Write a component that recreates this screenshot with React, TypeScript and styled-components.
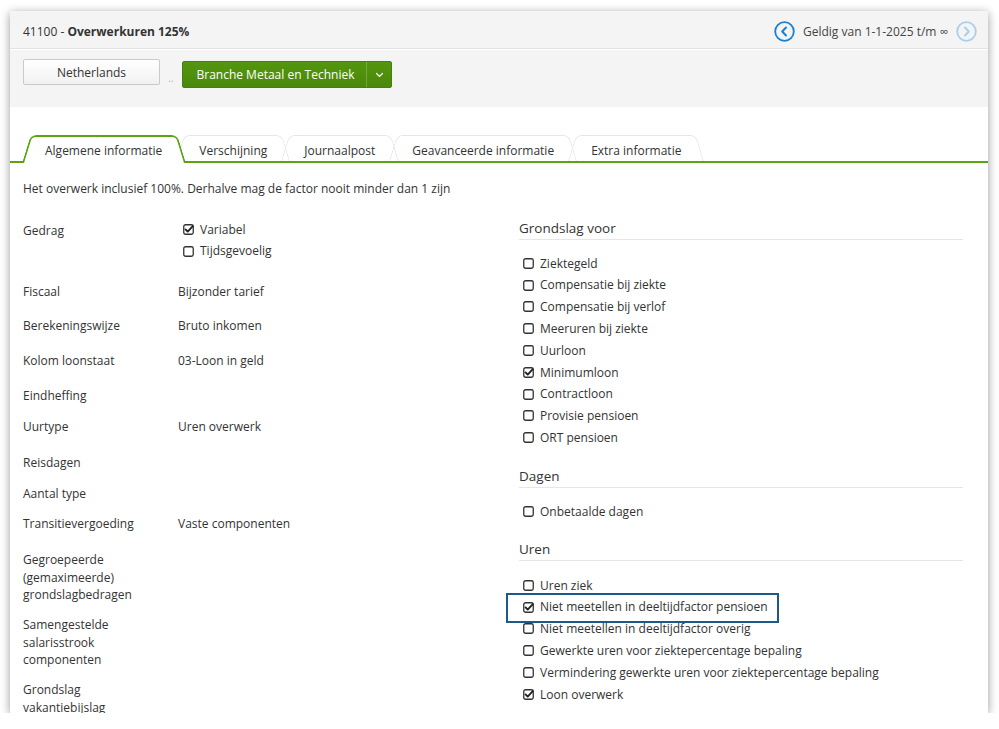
import React from "react";
import styled, { createGlobalStyle } from "styled-components";

const Global = createGlobalStyle`
  html, body { margin: 0; padding: 0; background: #fff; }
  body {
    font-family: "Open Sans", "Noto Sans", Arial, sans-serif;
    font-size: 12px;
    color: #333;
  }
  * { box-sizing: border-box; }
`;

const Panel = styled.div`
  margin: 11px 0 0 10px;
  width: 978px;
  height: 702px;
  background: #fff;
  box-shadow: 0 2px 9px rgba(0, 0, 0, 0.4);
  overflow: hidden;
`;

const Header = styled.div`
  background: #f4f4f4;
  height: 96px;
`;

const TitleBar = styled.div`
  height: 38px;
  display: flex;
  align-items: center;
  justify-content: space-between;
  padding: 4px 11px 0 13px;
  border-bottom: 1px solid #e2e2e2;
  box-shadow: 0 1px 0 #fff;
`;

const Title = styled.div`
  font-size: 12px;
  color: #333;
  b { font-weight: 700; }
`;

const Validity = styled.div`
  display: flex;
  align-items: center;
  gap: 8px;
  color: #444;
`;

const Toolbar = styled.div`
  display: flex;
  align-items: flex-start;
  padding: 10px 0 0 13px;
`;

const PlainButton = styled.button`
  width: 137px;
  height: 26px;
  font: inherit;
  color: #333;
  background: linear-gradient(#ffffff, #f1f1f1);
  border: 1px solid #cacaca;
  border-radius: 2px;
  padding: 0;
`;

const Dots = styled.span`
  width: 22px;
  text-align: center;
  padding-top: 12px;
  font-size: 10px;
  color: #aaa;
`;

const SplitButton = styled.div`
  display: flex;
  height: 27px;
  margin-top: 2px;
  background: linear-gradient(#54960f, #4a880a);
  border: 1px solid #45800a;
  border-radius: 2px;
  color: #fff;
`;

const SplitMain = styled.div`
  width: 183px;
  display: flex;
  align-items: center;
  justify-content: center;
  padding-left: 2px;
  font-size: 12px;
`;

const SplitToggle = styled.div`
  width: 25px;
  display: flex;
  align-items: center;
  justify-content: center;
  border-left: 1px solid rgba(255, 255, 255, 0.22);
`;

const TabStrip = styled.div`
  display: flex;
  margin-top: 28px;
  padding-left: 12px;
  height: 28px;
  border-bottom: 2px solid #5ba514;
`;

const Tab = styled.div<{ $active?: boolean }>`
  position: relative;
  height: 26px;
  padding: 4px 23px 0;
  display: flex;
  align-items: center;
  font-size: 12px;
  color: #333;
  white-space: nowrap;
  z-index: ${(p) => (p.$active ? 3 : 1)};
  & + & { margin-left: -9px; }

  &::before,
  &::after {
    content: "";
    position: absolute;
    top: 0;
    bottom: ${(p) => (p.$active ? "-2px" : "0")};
    background: ${(p) => (p.$active ? "#fff" : "transparent")};
    border-top: ${(p) => (p.$active ? "2px solid #5ba514" : "1px solid #e0e7ee")};
    z-index: -1;
    transform-origin: bottom;
  }
  &::before {
    left: 0;
    right: 50%;
    border-left: ${(p) => (p.$active ? "2px solid #5ba514" : "1px solid #e0e7ee")};
    border-top-left-radius: 6px;
    transform: skewX(-17deg);
  }
  &::after {
    left: 50%;
    right: 0;
    border-right: ${(p) => (p.$active ? "2px solid #5ba514" : "1px solid #e0e7ee")};
    border-top-right-radius: 6px;
    transform: skewX(17deg);
  }
`;

const Body = styled.div`
  padding: 17px 25px 0 13px;
`;

const Description = styled.div`
  line-height: 17.5px;
`;

const Columns = styled.div`
  display: grid;
  grid-template-columns: 496px 1fr;
  margin-top: 21px;
`;

const Row = styled.div<{ $pad: number }>`
  display: grid;
  grid-template-columns: 155px 1fr;
  align-items: start;
  padding-bottom: ${(p) => p.$pad}px;
`;

const Label = styled.div`
  padding-top: 3px;
  line-height: 17.5px;
`;

const Value = styled.div`
  padding-top: 3px;
  line-height: 17.5px;
`;

const CheckList = styled.div`
  padding-left: 5px;
`;

const CheckItem = styled.div`
  position: relative;
  display: flex;
  align-items: center;
  gap: 6px;
  height: 21.8px;
  line-height: 17.5px;
`;

const Highlight = styled.div`
  position: absolute;
  left: -17px;
  top: -3px;
  width: 273px;
  height: 30px;
  border: 2.5px solid #1c5a88;
  pointer-events: none;
`;

const Section = styled.div`
  & + & { margin-top: 18px; }
`;

const SectionTitle = styled.div`
  font-size: 13.5px;
  line-height: 19px;
  padding-bottom: 1px;
  border-bottom: 1px solid #e6e6e6;
  color: #333;
`;

const SectionList = styled.div`
  padding: 13px 0 0 4px;
`;

const CheckIcon = ({ checked }: { checked?: boolean }) => (
  <svg width="11" height="11" viewBox="0 0 11 11" style={{ flex: "none" }}>
    <rect x="0.75" y="0.75" width="9.5" height="9.5" rx="1.8" fill="none" stroke="#333" strokeWidth="1.3" />
    {checked && (
      <path d="M2.6 5.4 L4.7 7.6 L9.8 2.2" fill="none" stroke="#222" strokeWidth="1.9" strokeLinecap="round" strokeLinejoin="round" />
    )}
  </svg>
);

const NavCircle = ({ dir, color }: { dir: "left" | "right"; color: string }) => (
  <svg width="21" height="21" viewBox="0 0 21 21">
    <circle cx="10.5" cy="10.5" r="9.3" fill="none" stroke={color} strokeWidth="1.8" />
    {dir === "left" ? (
      <path d="M12 6.5 L8.2 10.5 L12 14.5" fill="none" stroke={color} strokeWidth="2" strokeLinecap="round" strokeLinejoin="round" />
    ) : (
      <path d="M9 6.5 L12.8 10.5 L9 14.5" fill="none" stroke={color} strokeWidth="2" strokeLinecap="round" strokeLinejoin="round" />
    )}
  </svg>
);

const Chevron = () => (
  <svg width="9" height="6" viewBox="0 0 9 6">
    <path d="M1.5 1.5 L4.5 4.5 L7.5 1.5" fill="none" stroke="#fff" strokeWidth="1.2" strokeLinecap="round" />
  </svg>
);

type Check = { label: string; checked?: boolean; highlight?: boolean };

const leftRows: { label: string[]; value?: string; checks?: Check[]; pad: number }[] = [
  { label: ["Gedrag"], checks: [{ label: "Variabel", checked: true }, { label: "Tijdsgevoelig" }], pad: 18 },
  { label: ["Fiscaal"], value: "Bijzonder tarief", pad: 13.5 },
  { label: ["Berekeningswijze"], value: "Bruto inkomen", pad: 14.5 },
  { label: ["Kolom loonstaat"], value: "03-Loon in geld", pad: 14.5 },
  { label: ["Eindheffing"], pad: 10.5 },
  { label: ["Uurtype"], value: "Uren overwerk", pad: 15.5 },
  { label: ["Reisdagen"], pad: 10.5 },
  { label: ["Aantal type"], pad: 9.5 },
  { label: ["Transitievergoeding"], value: "Vaste componenten", pad: 15.5 },
  { label: ["Gegroepeerde", "(gemaximeerde)", "grondslagbedragen"], pad: 9.5 },
  { label: ["Samengestelde", "salarisstrook", "componenten"], pad: 9.5 },
  { label: ["Grondslag", "vakantiebijslag"], pad: 10 },
];

const sections: { title: string; items: Check[] }[] = [
  {
    title: "Grondslag voor",
    items: [
      { label: "Ziektegeld" },
      { label: "Compensatie bij ziekte" },
      { label: "Compensatie bij verlof" },
      { label: "Meeruren bij ziekte" },
      { label: "Uurloon" },
      { label: "Minimumloon", checked: true },
      { label: "Contractloon" },
      { label: "Provisie pensioen" },
      { label: "ORT pensioen" },
    ],
  },
  { title: "Dagen", items: [{ label: "Onbetaalde dagen" }] },
  {
    title: "Uren",
    items: [
      { label: "Uren ziek" },
      { label: "Niet meetellen in deeltijdfactor pensioen", checked: true, highlight: true },
      { label: "Niet meetellen in deeltijdfactor overig" },
      { label: "Gewerkte uren voor ziektepercentage bepaling" },
      { label: "Vermindering gewerkte uren voor ziektepercentage bepaling" },
      { label: "Loon overwerk", checked: true },
    ],
  },
];

const tabs = ["Algemene informatie", "Verschijning", "Journaalpost", "Geavanceerde informatie", "Extra informatie"];

const CheckRow = ({ item }: { item: Check }) => (
  <CheckItem>
    <CheckIcon checked={item.checked} />
    <span>{item.label}</span>
    {item.highlight && <Highlight />}
  </CheckItem>
);

export default function App() {
  return (
    <>
      <Global />
      <Panel>
        <Header>
          <TitleBar>
            <Title>
              41100 - <b>Overwerkuren 125%</b>
            </Title>
            <Validity>
              <NavCircle dir="left" color="#1a80d4" />
              <span>Geldig van 1-1-2025 t/m ∞</span>
              <NavCircle dir="right" color="#a6d0f0" />
            </Validity>
          </TitleBar>
          <Toolbar>
            <PlainButton>Netherlands</PlainButton>
            <Dots>..</Dots>
            <SplitButton>
              <SplitMain>Branche Metaal en Techniek</SplitMain>
              <SplitToggle>
                <Chevron />
              </SplitToggle>
            </SplitButton>
          </Toolbar>
        </Header>
        <TabStrip>
          {tabs.map((t, i) => (
            <Tab key={t} $active={i === 0}>
              {t}
            </Tab>
          ))}
        </TabStrip>
        <Body>
          <Description>Het overwerk inclusief 100%. Derhalve mag de factor nooit minder dan 1 zijn</Description>
          <Columns>
            <div>
              {leftRows.map((r) => (
                <Row key={r.label.join(" ")} $pad={r.pad}>
                  <Label>
                    {r.label.map((l) => (
                      <div key={l}>{l}</div>
                    ))}
                  </Label>
                  {r.checks ? (
                    <CheckList>
                      {r.checks.map((c) => (
                        <CheckRow key={c.label} item={c} />
                      ))}
                    </CheckList>
                  ) : (
                    <Value>{r.value}</Value>
                  )}
                </Row>
              ))}
            </div>
            <div>
              {sections.map((s) => (
                <Section key={s.title}>
                  <SectionTitle>{s.title}</SectionTitle>
                  <SectionList>
                    {s.items.map((c) => (
                      <CheckRow key={c.label} item={c} />
                    ))}
                  </SectionList>
                </Section>
              ))}
            </div>
          </Columns>
        </Body>
      </Panel>
    </>
  );
}
